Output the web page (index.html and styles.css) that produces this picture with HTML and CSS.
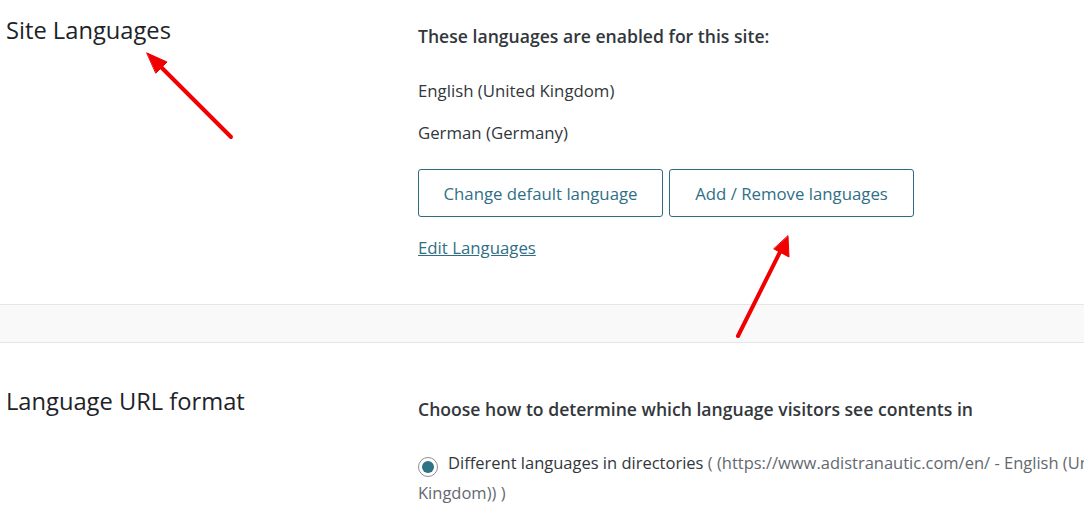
FILE: index.html
```html
<!DOCTYPE html>
<html>
<head>
<meta charset="utf-8">
<link rel="stylesheet" href="styles.css">
</head>
<body>
<div class="page">
  <section class="row first">
    <h2 class="label">Site Languages</h2>
    <div class="content">
      <p class="lead">These languages are enabled for this site:</p>
      <p class="lang">English (United Kingdom)</p>
      <p class="lang">German (Germany)</p>
      <div class="buttons">
        <button class="btn">Change default language</button>
        <button class="btn">Add / Remove languages</button>
      </div>
      <a class="link" href="#">Edit Languages</a>
    </div>
  </section>
  <div class="separator"></div>
  <section class="row second">
    <h2 class="label">Language URL format</h2>
    <div class="content">
      <p class="lead">Choose how to determine which language visitors see contents in</p>
      <label class="option"><span class="radio"><span class="dot"></span></span>Different languages in directories <span class="hint">( (https://www.adistranautic.com/en/ - English (United Kingdom)) )</span></label>
    </div>
  </section>
  <svg class="arrows" width="1084" height="510" viewBox="0 0 1084 510">
    <g stroke="#f00000" stroke-width="4" stroke-linecap="round" fill="#f00000">
      <line x1="231" y1="137" x2="160" y2="66"/>
      <polygon points="147,53 167,62 156,73" stroke-width="1"/>
      <line x1="738" y1="336" x2="781" y2="250"/>
      <polygon points="788,236 789,257 774,249" stroke-width="1"/>
    </g>
  </svg>
</div>
</body>
</html>
```
FILE: styles.css
```css
html, body {
  margin: 0;
  padding: 0;
  background: #ffffff;
  overflow: hidden;
}
body {
  width: 1084px;
  height: 510px;
  font-family: "Open Sans", "Noto Sans", sans-serif;
  color: #2c3338;
}
.page {
  position: relative;
  width: 1084px;
  height: 510px;
  overflow: hidden;
}
.row {
  display: flex;
  width: 1170px;
}
.label {
  width: 412px;
  flex: none;
  margin: 0;
  padding-left: 6px;
  font-size: 23.7px;
  font-weight: 400;
  color: #1d2327;
  line-height: 32px;
}
.content {
  flex: 1;
  min-width: 0;
}
.first { height: 304px; }
.first .label { padding-top: 14px; }
.first .content { padding-top: 24px; }
.second .label { padding-top: 42px; }
.second .content { padding-top: 54px; }
.lead {
  margin: 0;
  font-size: 17.6px;
  font-weight: 600;
  color: #32373c;
  line-height: 24px;
}
.lang {
  margin: 0;
  font-size: 16.8px;
  line-height: 24px;
  color: #32373c;
}
.first .lead { margin-bottom: 31px; }
.lang + .lang { margin-top: 18px; }
.buttons {
  display: flex;
  gap: 6px;
  margin-top: 24px;
}
.btn {
  width: 245px;
  height: 48px;
  box-sizing: border-box;
  background: #fff;
  border: 1px solid #2e6c83;
  border-radius: 3px;
  color: #2f6f86;
  font-family: "Open Sans", "Noto Sans", sans-serif;
  font-size: 16.8px;
  padding: 0;
}
.link {
  display: inline-block;
  margin-top: 19px;
  color: #2f6f86;
  font-size: 16.8px;
  line-height: 24px;
  text-decoration: underline;
}
.separator {
  height: 37px;
  background: #f9f9f9;
  border-top: 1px solid #e6e6e6;
  border-bottom: 1px solid #e6e6e6;
}
.option {
  display: block;
  margin-top: 27px;
  font-size: 16.5px;
  line-height: 30px;
  color: #32373c;
}
.radio {
  display: inline-flex;
  align-items: center;
  justify-content: center;
  width: 20px;
  height: 20px;
  box-sizing: border-box;
  border: 1px solid #8c8f94;
  border-radius: 50%;
  margin: 0 10px 0 0;
  vertical-align: -4px;
  background: #fff;
}
.dot {
  width: 12px;
  height: 12px;
  border-radius: 50%;
  background: #2e7285;
}
.hint { color: #646970; }
.arrows {
  position: absolute;
  left: 0;
  top: 0;
  pointer-events: none;
}
```
